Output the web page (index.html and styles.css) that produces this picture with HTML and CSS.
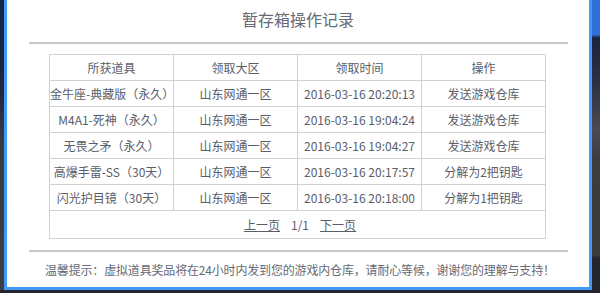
FILE: index.html
```html
<!DOCTYPE html>
<html lang="zh-CN">
<head>
<meta charset="utf-8">
<title>暂存箱操作记录</title>
<link rel="stylesheet" href="styles.css">
</head>
<body>
<div class="stage">
  <div class="side side-left"></div>
  <div class="modal">
    <h1 class="title">暂存箱操作记录</h1>
    <div class="rule"></div>
    <table class="records">
      <thead>
        <tr><th>所获道具</th><th>领取大区</th><th>领取时间</th><th>操作</th></tr>
      </thead>
      <tbody>
        <tr><td>金牛座-典藏版（永久）</td><td>山东网通一区</td><td>2016-03-16 20:20:13</td><td>发送游戏仓库</td></tr>
        <tr><td>M4A1-死神（永久）</td><td>山东网通一区</td><td>2016-03-16 19:04:24</td><td>发送游戏仓库</td></tr>
        <tr><td>无畏之矛（永久）</td><td>山东网通一区</td><td>2016-03-16 19:04:27</td><td>发送游戏仓库</td></tr>
        <tr><td>高爆手雷-SS（30天）</td><td>山东网通一区</td><td>2016-03-16 20:17:57</td><td>分解为2把钥匙</td></tr>
        <tr><td>闪光护目镜（30天）</td><td>山东网通一区</td><td>2016-03-16 20:18:00</td><td>分解为1把钥匙</td></tr>
        <tr class="pager"><td colspan="4"><a href="#">上一页</a><span class="count">1/1</span><a href="#">下一页</a></td></tr>
      </tbody>
    </table>
    <div class="rule rule-bottom"></div>
    <p class="tip">温馨提示：虚拟道具奖品将在24小时内发到您的游戏内仓库，请耐心等候，谢谢您的理解与支持！</p>
  </div>
  <div class="side side-right"></div>
</div>
</body>
</html>
```
FILE: styles.css
```css
* { box-sizing: border-box; }
html, body { margin: 0; padding: 0; }
body {
  width: 600px;
  height: 293px;
  overflow: hidden;
  background: #23262e;
  font-family: "Noto Sans CJK SC", "Noto Sans", sans-serif;
  color: #5a5e6a;
}
.stage {
  display: flex;
  height: 290px;
}
.side { flex: none; height: 290px; }
.side-left {
  width: 4px;
  background: linear-gradient(#15234a 0%, #1e2640 30%, #3a3c44 50%, #3c3d42 100%);
}
.side-right {
  width: 8px;
  background: linear-gradient(#2f6fd6 0, #2f6fd6 12%, #1c2442 13%, #2c2f45 28%, #4a4b52 45%, #3c3c40 55%, #3a3a3d 88%, #24262e 89%, #24262e 100%);
}
.modal {
  flex: none;
  width: 588px;
  height: 290px;
  background: #fff;
  border: 3px solid #3f9bf7;
  border-top: 0;
  display: flex;
  flex-direction: column;
}
.title {
  margin: 0;
  padding-top: 8px;
  height: 42px;
  font-size: 16px;
  line-height: 22px;
  font-weight: normal;
  text-align: center;
  color: #666a74;
}
.rule {
  height: 2px;
  margin: 0 21px 0 22px;
  background: #c8c8c8;
  flex: none;
}
.records {
  margin: 10px 0 0 42px;
  width: 497px;
  border-collapse: collapse;
  table-layout: fixed;
  font-size: 12px;
}
.records th, .records td {
  border: 1px solid #d2d2d2;
  height: 26px;
  padding: 0;
  text-align: center;
  font-weight: normal;
  white-space: nowrap;
  line-height: 16px;
}
.records .pager td {
  height: 28px;
  padding-left: 5px;
}
.pager a {
  color: #5a5e6a;
  text-decoration: underline;
}
.pager .count {
  margin: 0 11px;
}
.rule-bottom {
  margin-top: 11px;
}
.tip {
  margin: 10px 0 0 38px;
  font-size: 12px;
  line-height: 16px;
  color: #656a76;
  white-space: nowrap;
  letter-spacing: -0.17px;
}
```
